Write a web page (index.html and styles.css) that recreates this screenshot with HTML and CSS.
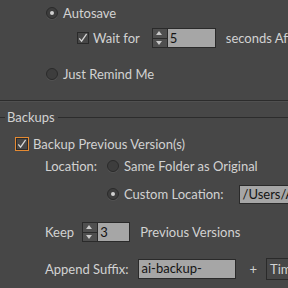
FILE: index.html
```html
<!DOCTYPE html>
<html lang="en">
<head>
    <meta charset="UTF-8">
    <title>Preferences - File Handling</title>
    <link rel="stylesheet" href="styles.css">
</head>
<body>
    <div class="panel">
        <div class="saving">
            <div class="row row-autosave">
                <span class="radio checked"></span>
                <span class="label">Autosave</span>
            </div>
            <div class="row row-wait">
                <span class="check">
                    <svg width="12" height="12" viewBox="0 0 12 12"><path d="M2.5 6.5 L5 9.5 L10.5 1.5" fill="none" stroke="#d6d6d6" stroke-width="1.4"/></svg>
                </span>
                <span class="label">Wait for</span>
                <div class="spinner spinner-wait">
                    <div class="spin-btns">
                        <span class="spin-up"></span>
                        <span class="spin-down"></span>
                    </div>
                    <span class="spin-value">5</span>
                </div>
                <span class="label after-spin">seconds After Last Edit</span>
            </div>
            <div class="row row-remind">
                <span class="radio"></span>
                <span class="label">Just Remind Me</span>
            </div>
        </div>

        <div class="divider"></div>

        <div class="backups">
            <div class="section-title">
                <span class="line short"></span>
                <span class="title">Backups</span>
                <span class="line"></span>
            </div>

            <div class="row row-backup">
                <span class="check focus">
                    <svg width="12" height="12" viewBox="0 0 12 12"><path d="M2.5 6.5 L5 9.5 L10.5 1.5" fill="none" stroke="#d6d6d6" stroke-width="1.4"/></svg>
                </span>
                <span class="label">Backup Previous Version(s)</span>
            </div>

            <div class="row row-location">
                <span class="label field-name">Location:</span>
                <span class="radio"></span>
                <span class="label">Same Folder as Original</span>
            </div>

            <div class="row row-custom">
                <span class="field-name"></span>
                <span class="radio checked"></span>
                <span class="label">Custom Location:</span>
                <span class="text-field path">/Users/Adobe/Backups</span>
            </div>

            <div class="row row-keep">
                <span class="label">Keep</span>
                <div class="spinner spinner-keep">
                    <div class="spin-btns">
                        <span class="spin-up"></span>
                        <span class="spin-down"></span>
                    </div>
                    <span class="spin-value">3</span>
                </div>
                <span class="label after-spin">Previous Versions</span>
            </div>

            <div class="row row-suffix">
                <span class="label">Append Suffix:</span>
                <span class="text-field suffix">ai-backup-</span>
                <span class="label plus">+</span>
                <span class="dropdown">Timestamp</span>
            </div>
        </div>
    </div>
</body>
</html>
```

FILE: styles.css
```css
* {
    margin: 0;
    padding: 0;
    box-sizing: border-box;
}

body {
    background: #474747;
    font-family: Lato, "Open Sans", sans-serif;
    font-size: 13px;
    color: #d2d2d2;
    overflow: hidden;
}

.panel {
    width: 288px;
    height: 288px;
    overflow: hidden;
}

.row {
    display: flex;
    align-items: center;
    height: 20px;
    white-space: nowrap;
}

.label {
    line-height: 20px;
}

/* radios and checkboxes */
.radio {
    width: 12px;
    height: 12px;
    border-radius: 50%;
    border: 1px solid #2a2a2a;
    background: #3d3d3d;
    box-shadow: 0 1px 0 rgba(255,255,255,0.06);
    display: flex;
    align-items: center;
    justify-content: center;
    flex-shrink: 0;
}

.radio.checked::after {
    content: "";
    width: 4px;
    height: 4px;
    border-radius: 50%;
    background: #d0d0d0;
}

.check {
    width: 12px;
    height: 12px;
    border: 1px solid #2a2a2a;
    background: #474747;
    display: flex;
    flex-shrink: 0;
}

.check svg {
    margin: -1px 0 0 -1px;
}

.check.focus {
    outline: 1.5px solid #e58a32;
    outline-offset: 0;
}

/* saving options */
.row-autosave {
    height: 26px;
    padding-left: 46px;
}

.row-autosave .radio {
    margin-right: 5px;
}

.row-wait {
    height: 24px;
    padding-left: 77px;
}

.row-wait .check {
    margin-right: 4px;
}

.spinner {
    display: flex;
    height: 20px;
    border: 1px solid #2a2a2a;
    flex-shrink: 0;
}

.spinner-wait {
    width: 64px;
    margin-left: 12px;
}

.spin-btns {
    width: 15px;
    display: flex;
    flex-direction: column;
    border-right: 1px solid #2a2a2a;
    background: #4f4f4f;
}

.spin-up, .spin-down {
    flex: 1;
    position: relative;
}

.spin-up {
    border-bottom: 1px solid #2a2a2a;
}

.spin-up::after, .spin-down::after {
    content: "";
    position: absolute;
    left: 3px;
    border-left: 3.5px solid transparent;
    border-right: 3.5px solid transparent;
}

.spin-up::after {
    top: 2px;
    border-bottom: 4px solid #c8c8c8;
}

.spin-down::after {
    top: 2px;
    border-top: 4px solid #c8c8c8;
}

.spin-value {
    flex: 1;
    background: #a6a6a6;
    color: #141414;
    padding-left: 2px;
    line-height: 18px;
}

.after-spin {
    margin-left: 10px;
}

.row-remind {
    height: 24px;
    margin-top: 12px;
    padding-left: 46px;
}

.row-remind .radio {
    margin-right: 5px;
}

.divider {
    margin-top: 14px;
    height: 2px;
    border-top: 1px solid #2c2c2c;
    border-bottom: 1px solid #505050;
}

/* backups */
.section-title {
    display: flex;
    align-items: center;
    height: 18px;
    margin-top: 6px;
}

.section-title .line {
    flex: 1;
    height: 1px;
    background: #2c2c2c;
}

.section-title .line.short {
    flex: 0 0 5px;
}

.section-title .title {
    padding: 0 3px 0 2px;
    line-height: 18px;
}

.row-backup {
    margin-top: 8px;
    padding-left: 16px;
}

.row-backup .check {
    margin-right: 5px;
}

.row-location {
    margin-top: 2px;
    padding-left: 45px;
}

.field-name {
    width: 62px;
    flex-shrink: 0;
}

.row-location .radio, .row-custom .radio {
    margin-right: 5px;
}

.row-custom {
    margin-top: 8px;
    padding-left: 45px;
    height: 20px;
}

.text-field {
    height: 19px;
    border: 1px solid #2a2a2a;
    background: #a6a6a6;
    color: #141414;
    padding-left: 3px;
    line-height: 17px;
    flex-shrink: 0;
    overflow: hidden;
}

.path {
    margin-left: 15px;
    width: 120px;
}

.row-keep {
    margin-top: 18px;
    padding-left: 45px;
}

.spinner-keep {
    width: 48px;
    margin-left: 8px;
}

.row-suffix {
    margin-top: 17px;
    padding-left: 45px;
}

.suffix {
    width: 98px;
    height: 20px;
    margin-left: 9px;
}

.plus {
    margin-left: 14px;
}

.dropdown {
    margin-left: 9px;
    height: 22px;
    width: 90px;
    border: 1px solid #2a2a2a;
    padding-left: 3px;
    line-height: 20px;
    flex-shrink: 0;
}
```
